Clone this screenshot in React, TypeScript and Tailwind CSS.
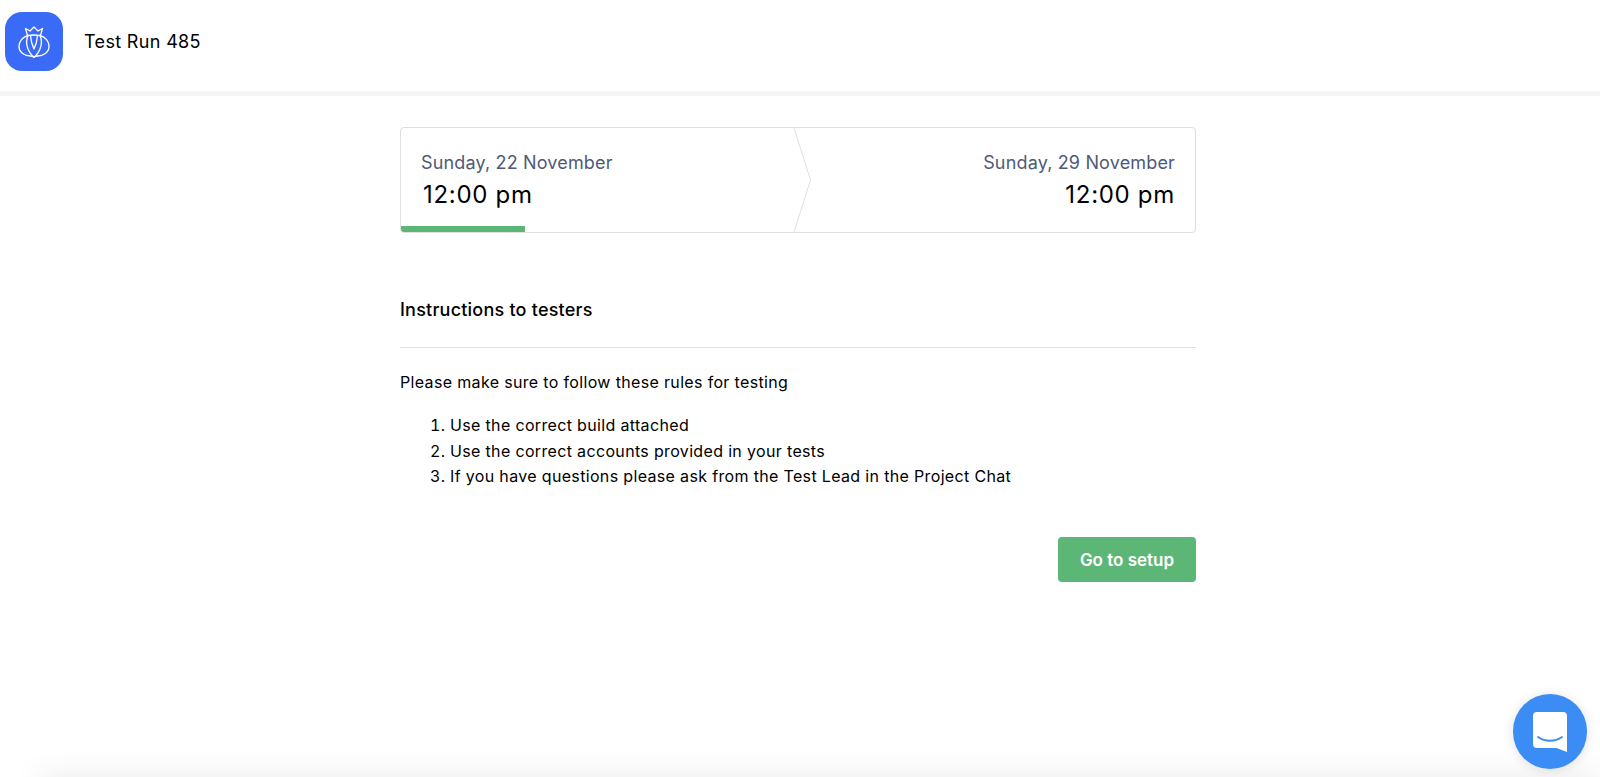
import React from 'react'

const App: React.FC = () => {
  return (
    <div className="relative h-[777px] overflow-hidden bg-white font-['Inter',sans-serif] text-black">
      <header className="flex h-[96px] items-start border-b-[5px] border-[#F5F5F5] pl-[5px] pt-[12px]">
        <div className="flex h-[59px] w-[58px] items-center justify-center rounded-[17px] bg-[#3A6BF6]">
          <svg width="40" height="40" viewBox="0 0 40 40" fill="none" stroke="white" strokeWidth="1.3" strokeLinejoin="round">
            <path d="M13.5 13.5 L11.5 6.5 L16 9 L20 5 L24 9 L28.5 6.5 L26.5 13.5" />
            <path d="M14 13.5 C8.5 15 5 19.5 5 24.5 C5 30.5 11 34 16.5 34 C18 34 19.2 34.6 20 35.2 C20.8 34.6 22 34 23.5 34 C29 34 35 30.5 35 24.5 C35 19.5 31.5 15 26 13.5 C22 12.8 18 12.8 14 13.5 Z" />
            <path d="M14 13.5 C11 20 13 29.5 20 35.2 C27 29.5 29 20 26 13.5" />
            <path d="M16.5 13.2 C16.8 18 18 23 20 27 C22 23 23.2 18 23.5 13.2" />
          </svg>
        </div>
        <h1 className="ml-[21px] mt-[18px] text-[18px] leading-[24px] tracking-[0.34px]">Test Run 485</h1>
      </header>

      <main className="ml-[400px] w-[796px] pt-[31px]">
        <div className="relative flex h-[106px] justify-between overflow-hidden rounded-[4px] border border-[#DDDFE2]">
          <div className="pl-[20px] pt-[22px]">
            <p className="text-[18px] leading-[26px] tracking-[0.16px] text-[#4F5A78]">Sunday, 22 November</p>
            <p className="ml-[2px] mt-[3px] text-[24px] leading-[32px] tracking-[0.7px]">12:00 pm</p>
          </div>
          <div className="pr-[20px] pt-[22px] text-right">
            <p className="text-[18px] leading-[26px] tracking-[0.16px] text-[#4F5A78]">Sunday, 29 November</p>
            <p className="mt-[3px] text-[24px] leading-[32px] tracking-[0.7px]">12:00 pm</p>
          </div>
          <svg className="absolute left-[392px] top-0" width="20" height="104" viewBox="0 0 20 104" fill="none" stroke="#DDDFE2">
            <path d="M1 0 L17.5 52 L1 104" />
          </svg>
          <div className="absolute bottom-0 left-0 h-[6px] w-[124px] bg-[#5CB776]" />
        </div>

        <h2 className="mt-[63px] text-[18px] font-medium leading-[28px] tracking-[0.22px]">Instructions to testers</h2>
        <div className="mt-[23px] border-t border-[#DDDFE2]" />
        <p className="mt-[22px] text-[16px] leading-[24px] tracking-[0.34px]">Please make sure to follow these rules for testing</p>
        <ol className="mt-[19px] list-decimal pl-[50px] text-[16px] leading-[25.5px] tracking-[0.34px]">
          <li>Use the correct build attached</li>
          <li>Use the correct accounts provided in your tests</li>
          <li>If you have questions please ask from the Test Lead in the Project Chat</li>
        </ol>
        <div className="mt-[47px] flex justify-end">
          <button className="h-[45px] w-[138px] rounded-[4px] bg-[#5CB776] pt-[3px] text-[17px] font-semibold text-white">
            Go to setup
          </button>
        </div>
      </main>

      {/* page shadow along the bottom edge */}
      <div className="absolute bottom-[-20px] left-[40px] right-0 h-[20px] shadow-[0_0_30px_rgba(0,0,0,0.1)]" />

      <div className="absolute bottom-[8px] right-[13px] flex h-[75px] w-[74px] items-center justify-center rounded-full bg-[#3B8DF5] shadow-[0_1px_12px_rgba(0,0,0,0.12)]">
        <svg width="36" height="42" viewBox="0 0 36 42" fill="none">
          <path d="M5 1 H31 a4 4 0 0 1 4 4 V41 L24.5 37 H5 a4 4 0 0 1 -4 -4 V5 a4 4 0 0 1 4 -4 Z" fill="white" />
          <path d="M6 26 C13 31 23 31 30 26" stroke="#3B8DF5" strokeWidth="1.8" strokeLinecap="round" />
        </svg>
      </div>
    </div>
  )
}

export default App
